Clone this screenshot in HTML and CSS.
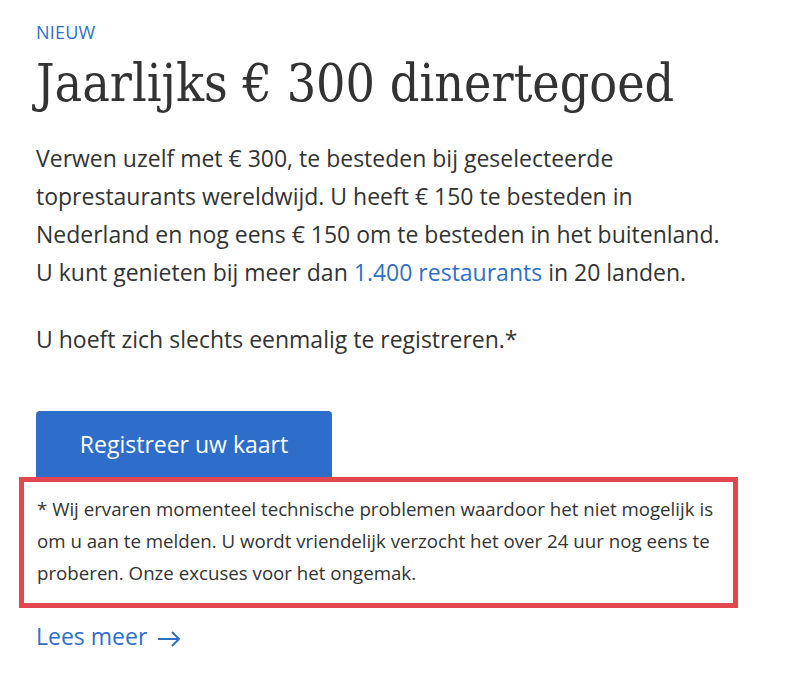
FILE: index.html
```html
<!DOCTYPE html>
<html lang="nl">
<head>
<meta charset="utf-8">
<title>Jaarlijks € 300 dinertegoed</title>
<link rel="stylesheet" href="styles.css">
</head>
<body>
<main class="page">
  <div class="eyebrow">NIEUW</div>
  <h1 class="title">Jaarlijks € 300 dinertegoed</h1>
  <p class="lead">Verwen uzelf met € 300, te besteden bij geselecteerde toprestaurants wereldwijd. U heeft € 150 te besteden in Nederland en nog eens € 150 om te besteden in het buitenland. U kunt genieten bij meer dan <a class="link" href="#">1.400 restaurants</a> in 20 landen.</p>
  <p class="lead once">U hoeft zich slechts eenmalig te registreren.*</p>
  <a class="btn" href="#">Registreer uw kaart</a>
  <div class="notice">* Wij ervaren momenteel technische problemen waardoor het niet mogelijk is om u aan te melden. U wordt vriendelijk verzocht het over 24 uur nog eens te proberen. Onze excuses voor het ongemak.</div>
  <a class="more" href="#">Lees meer <svg class="arrow" width="24" height="16" viewBox="0 0 24 16" aria-hidden="true"><path d="M1 8H22M15 1L22 8L15 15" fill="none" stroke="currentColor" stroke-width="2"/></svg></a>
</main>
</body>
</html>
```

FILE: styles.css
```css
html, body {
  margin: 0;
  padding: 0;
  background: #fff;
}
body {
  font-family: "Open Sans", "Liberation Sans", sans-serif;
  color: #333;
}
.page {
  display: flex;
  flex-direction: column;
  align-items: flex-start;
  padding: 21px 0 0 36px;
  width: 720px;
}
.eyebrow {
  font-size: 18px;
  line-height: 22px;
  color: #2f6fc8;
  letter-spacing: 0.2px;
}
.title {
  margin: 8px 0 0;
  font-family: "DejaVu Serif Condensed", "Liberation Serif", serif;
  font-stretch: condensed;
  font-weight: normal;
  font-size: 51.5px;
  line-height: 64px;
  color: #333;
  white-space: nowrap;
}
.lead {
  margin: 24px 0 0;
  font-size: 23px;
  line-height: 38px;
  width: 690px;
}
.once {
  margin-top: 29px;
}
.link {
  color: #2f6fc8;
  text-decoration: none;
}
.btn {
  margin-top: 53px;
  display: flex;
  align-items: center;
  justify-content: center;
  width: 296px;
  height: 66px;
  background: #2f6dcb;
  color: #fff;
  text-decoration: none;
  font-size: 23px;
  border-radius: 4px 4px 0 0;
}
.notice {
  margin-left: -17px;
  width: 719px;
  box-sizing: border-box;
  border: 5px solid #e2464f;
  padding: 11px 13px 14px;
  font-size: 18.7px;
  line-height: 32px;
  color: #333;
}
.more {
  margin-top: 12px;
  display: flex;
  align-items: center;
  gap: 10px;
  font-size: 23px;
  line-height: 32px;
  color: #2f6fc8;
  text-decoration: none;
}
.arrow {
  display: block;
  margin-top: 6px;
}
```
